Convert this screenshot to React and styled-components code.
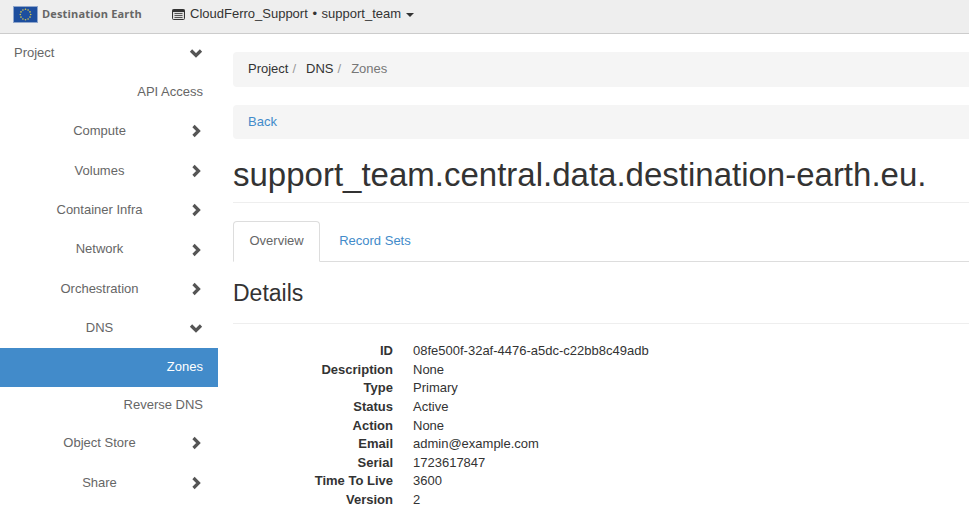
import styled, { createGlobalStyle } from 'styled-components';

const GlobalStyle = createGlobalStyle`
  html, body {
    margin: 0;
    height: 100%;
    overflow: hidden;
    background: #fff;
  }
  body {
    font-family: "Liberation Sans", Arial, sans-serif;
    font-size: 13px;
    line-height: 18.57px;
    color: #333;
  }
`;

const Page = styled.div`
  width: 969px;
  height: 515px;
  overflow: hidden;
`;

const Navbar = styled.header`
  height: 34px;
  box-sizing: border-box;
  display: flex;
  align-items: center;
  padding: 0 0 4px 13px;
  background: #eee;
  border-bottom: 1px solid #ccc;
`;

const LogoText = styled.span`
  margin-left: 4px;
  width: 130px;
  font-family: "Open Sans", sans-serif;
  font-size: 11px;
  font-weight: 700;
  letter-spacing: 0.17px;
  color: #666;
  white-space: nowrap;
`;

const ProjectPicker = styled.div`
  display: flex;
  align-items: center;
  gap: 5px;
  color: #333;
`;

const PickerName = styled.span`
  word-spacing: 1px;
`;

const Caret = styled.span`
  width: 0;
  height: 0;
  margin-left: 0;
  border-top: 4px solid #333;
  border-left: 4px solid transparent;
  border-right: 4px solid transparent;
`;

const Body = styled.div`
  display: flex;
  margin-top: -1px;
`;

const Sidebar = styled.nav`
  width: 218px;
  flex: none;
  padding-top: 0.4px;
`;

const NavRow = styled.div`
  display: flex;
  align-items: center;
  height: ${p => p.$h || 39.4}px;
  padding: 0 15px 0 ${p => (p.$top ? 14 : 0)}px;
  color: ${p => (p.$active ? '#fff' : '#666')};
  background: ${p => (p.$active ? '#428bca' : 'transparent')};
`;

const NavLabel = styled.span`
  flex: 1;
  text-align: ${p => p.$align};
  padding-left: ${p => (p.$align === 'center' ? 10 : 0)}px;
`;

const Chevron = styled.svg`
  width: 14px;
  height: 14px;
  flex: none;
  fill: none;
  stroke: #555;
  stroke-width: 3.2;
`;

const Main = styled.main`
  flex: 1;
  min-width: 0;
  padding: 19px 0 0 15px;
`;

const Strip = styled.div`
  display: flex;
  align-items: center;
  height: ${p => p.$h}px;
  margin-bottom: 18px;
  padding-left: 15px;
  background: #f5f5f5;
  border-radius: 4px 0 0 4px;
`;

const Crumb = styled.span`
  color: ${p => (p.$current ? '#777' : '#333')};
`;

const Slash = styled.span`
  padding: 0 10px 0 4px;
  color: #999;
`;

const Link = styled.a`
  color: #428bca;
`;

const Title = styled.h1`
  margin: 0;
  padding: 0 0 9px;
  border-bottom: 1px solid #eee;
  font-size: 33px;
  line-height: 36px;
  font-weight: 400;
  white-space: nowrap;
  color: #333;
`;

const Tabs = styled.div`
  display: flex;
  margin-top: 18px;
  height: 41px;
  box-sizing: border-box;
  border-bottom: 1px solid #ddd;
`;

const Tab = styled.div`
  box-sizing: border-box;
  height: 41px;
  display: flex;
  align-items: center;
  padding: 0 ${p => (p.$active ? 15.5 : 18)}px;
  color: ${p => (p.$active ? '#666' : '#428bca')};
  background: ${p => (p.$active ? '#fff' : 'transparent')};
  border: 1px solid ${p => (p.$active ? '#ddd' : 'transparent')};
  border-bottom-color: ${p => (p.$active ? '#fff' : 'transparent')};
  border-radius: 4px 4px 0 0;
`;

const SectionTitle = styled.h3`
  margin: 0;
  padding: 18px 0 17px;
  border-bottom: 1px solid #eee;
  font-size: 23px;
  line-height: 26px;
  font-weight: 400;
`;

const Details = styled.dl`
  display: grid;
  grid-template-columns: 160px 1fr;
  column-gap: 20px;
  margin: 18.3px 0 0;
`;

const Term = styled.dt`
  font-weight: 700;
  text-align: right;
`;

const Value = styled.dd`
  margin: 0;
`;

const EuFlag = () => {
  const stars = Array.from({ length: 12 }, (_, i) => {
    const a = (i * Math.PI) / 6;
    return <circle key={i} cx={12.5 + 5.2 * Math.cos(a)} cy={8.5 + 5.2 * Math.sin(a)} r="0.8" fill="#d8c84a" />;
  });
  return (
    <svg width="25" height="17" viewBox="0 0 25 17">
      <rect x="0.5" y="0.5" width="24" height="16" fill="#1d4e9e" stroke="#8fa6cc" />
      {stars}
    </svg>
  );
};

const ProjectIcon = () => (
  <svg width="13" height="11" viewBox="0 0 13 11">
    <rect x="0.5" y="0.5" width="12" height="10" rx="1" fill="#ddd" stroke="#333" />
    <rect x="0.5" y="0.5" width="12" height="2.5" fill="#333" />
    <path d="M2.5 4.5h8M2.5 6.5h8M2.5 8.5h8" stroke="#555" />
  </svg>
);

const nav = [
  { label: 'Project', open: true, top: true, align: 'left' },
  { label: 'API Access', align: 'right', h: 39 },
  { label: 'Compute', align: 'center' },
  { label: 'Volumes', align: 'center' },
  { label: 'Container Infra', align: 'center' },
  { label: 'Network', align: 'center' },
  { label: 'Orchestration', align: 'center' },
  { label: 'DNS', open: true, align: 'center' },
  { label: 'Zones', align: 'right', active: true, h: 39 },
  { label: 'Reverse DNS', align: 'right', h: 36 },
  { label: 'Object Store', align: 'center', h: 40 },
  { label: 'Share', align: 'center' },
];

const details = [
  ['ID', '08fe500f-32af-4476-a5dc-c22bb8c49adb'],
  ['Description', 'None'],
  ['Type', 'Primary'],
  ['Status', 'Active'],
  ['Action', 'None'],
  ['Email', 'admin@example.com'],
  ['Serial', '1723617847'],
  ['Time To Live', '3600'],
  ['Version', '2'],
];

const App = () => {
  return (
    <Page>
      <GlobalStyle />
      <Navbar>
        <EuFlag />
        <LogoText>Destination Earth</LogoText>
        <ProjectPicker>
          <ProjectIcon />
          <PickerName>CloudFerro_Support • support_team</PickerName>
          <Caret />
        </ProjectPicker>
      </Navbar>
      <Body>
        <Sidebar>
          {nav.map(item => (
            <NavRow key={item.label} $top={item.top} $active={item.active} $h={item.h}>
              <NavLabel $align={item.align}>{item.label}</NavLabel>
              {item.align !== 'right' && (
                <Chevron viewBox="0 0 14 14">
                  <path d={item.open ? 'M2 4.5l5 5 5-5' : 'M4.5 2l5 5-5 5'} />
                </Chevron>
              )}
            </NavRow>
          ))}
        </Sidebar>
        <Main>
          <Strip $h={35}>
            <Crumb>Project</Crumb>
            <Slash>/</Slash>
            <Crumb>DNS</Crumb>
            <Slash>/</Slash>
            <Crumb $current>Zones</Crumb>
          </Strip>
          <Strip $h={34}>
            <Link>Back</Link>
          </Strip>
          <Title>support_team.central.data.destination-earth.eu.</Title>
          <Tabs>
            <Tab $active>Overview</Tab>
            <Tab>
              <Link>Record Sets</Link>
            </Tab>
          </Tabs>
          <SectionTitle>Details</SectionTitle>
          <Details>
            {details.map(([term, value]) => [
              <Term key={term}>{term}</Term>,
              <Value key={term + '-v'}>{value}</Value>,
            ])}
          </Details>
        </Main>
      </Body>
    </Page>
  );
};

export default App;
